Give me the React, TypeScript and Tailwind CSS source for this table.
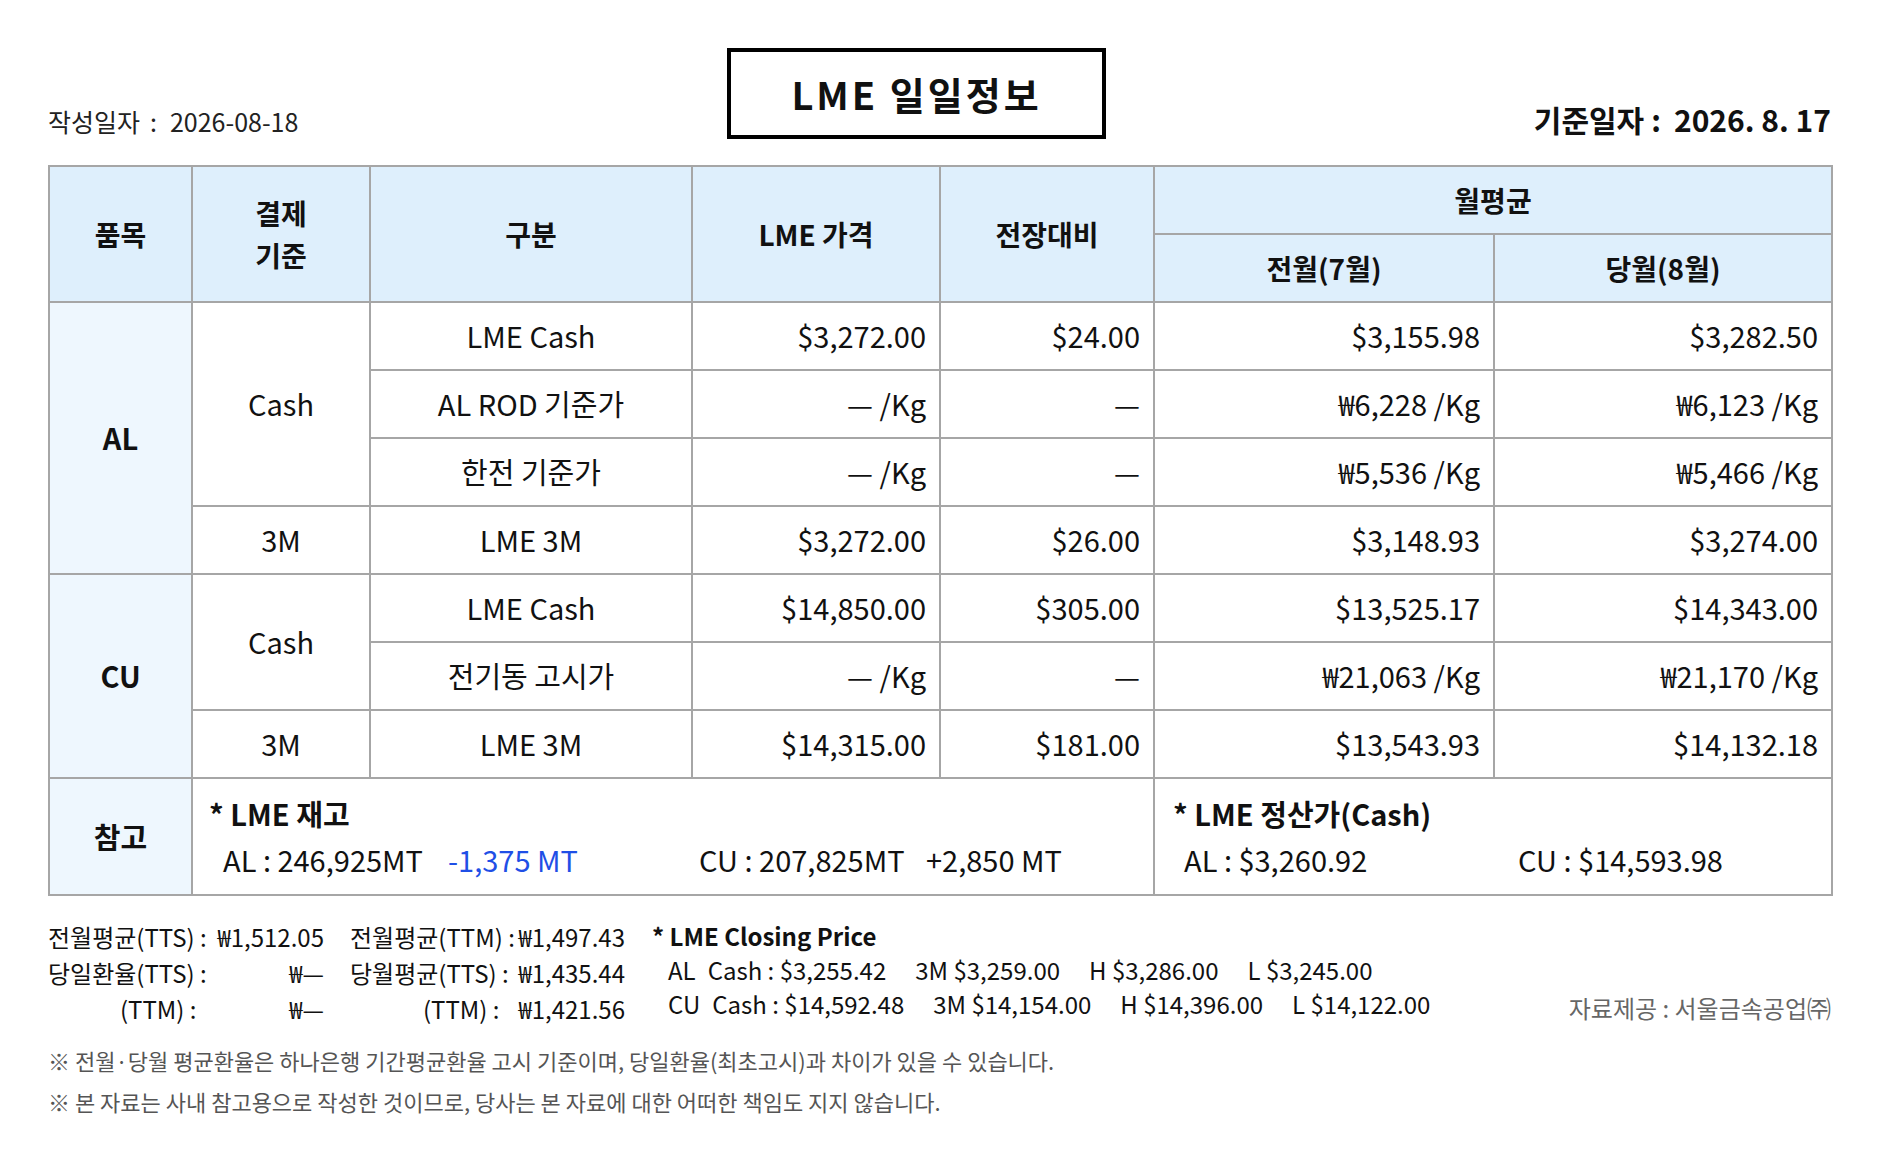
import React from 'react';

const FONT = "font-['Noto_Sans_CJK_KR','Noto_Sans',sans-serif]";
const CELL = 'border-2 border-[#a6a6a6] p-0 h-[68px]';
const NUM = `${CELL} text-right pr-[13px]`;
const MID = `${CELL} text-center`;

type Row = { sub: string; price: string; diff: string; prev: string; cur: string };

const AL_ROWS: Row[] = [
  { sub: 'LME Cash', price: '$3,272.00', diff: '$24.00', prev: '$3,155.98', cur: '$3,282.50' },
  { sub: 'AL ROD 기준가', price: '— /Kg', diff: '—', prev: '₩6,228 /Kg', cur: '₩6,123 /Kg' },
  { sub: '한전 기준가', price: '— /Kg', diff: '—', prev: '₩5,536 /Kg', cur: '₩5,466 /Kg' },
  { sub: 'LME 3M', price: '$3,272.00', diff: '$26.00', prev: '$3,148.93', cur: '$3,274.00' },
];

const CU_ROWS: Row[] = [
  { sub: 'LME Cash', price: '$14,850.00', diff: '$305.00', prev: '$13,525.17', cur: '$14,343.00' },
  { sub: '전기동 고시가', price: '— /Kg', diff: '—', prev: '₩21,063 /Kg', cur: '₩21,170 /Kg' },
  { sub: 'LME 3M', price: '$14,315.00', diff: '$181.00', prev: '$13,543.93', cur: '$14,132.18' },
];

function Values({ r }: { r: Row }) {
  return (
    <>
      <td className={MID}>{r.sub}</td>
      <td className={NUM}>{r.price}</td>
      <td className={NUM}>{r.diff}</td>
      <td className={NUM}>{r.prev}</td>
      <td className={NUM}>{r.cur}</td>
    </>
  );
}

export default function App() {
  return (
    <div className={`w-[1880px] h-[1164px] bg-white text-[#111] pl-[48px] pr-[49px] pt-[48px] ${FONT}`}>
      {/* title line */}
      <div className="flex items-end">
        <div className="flex-1 text-[25px] leading-[30px] pb-[3px] text-[#222]">
          작성일자<span className="ml-[10px] mr-[13px]">:</span>2026-08-18
        </div>
        <div className="w-[379px] h-[91px] mr-[46px] border-4 border-black flex items-center justify-center">
          <span className="text-[38px] font-bold tracking-[3px] leading-none">LME 일일정보</span>
        </div>
        <div className="flex-1 text-right text-[30px] font-bold leading-[34px] pb-[3px]">
          기준일자<span className="ml-[7px] mr-[13px]">:</span>2026. 8. 17
        </div>
      </div>

      {/* main table */}
      <table className="mt-[26px] w-[1783px] table-fixed border-collapse text-[29px]">
        <colgroup>
          <col className="w-[143px]" />
          <col className="w-[178px]" />
          <col className="w-[322px]" />
          <col className="w-[248px]" />
          <col className="w-[214px]" />
          <col className="w-[340px]" />
          <col className="w-[338px]" />
        </colgroup>
        <thead className="bg-[#deeffc] font-bold text-[28px]">
          <tr>
            <th rowSpan={2} className={MID}>품목</th>
            <th rowSpan={2} className={`${MID} leading-[42px]`}>결제<br />기준</th>
            <th rowSpan={2} className={MID}>구분</th>
            <th rowSpan={2} className={MID}>LME 가격</th>
            <th rowSpan={2} className={MID}>전장대비</th>
            <th colSpan={2} className={MID}>월평균</th>
          </tr>
          <tr>
            <th className={MID}>전월(7월)</th>
            <th className={MID}>당월(8월)</th>
          </tr>
        </thead>
        <tbody>
          {AL_ROWS.map((r, i) => (
            <tr key={'al' + i}>
              {i === 0 && <td rowSpan={4} className={`${MID} bg-[#eef7fe] font-bold`}>AL</td>}
              {i === 0 && <td rowSpan={3} className={MID}>Cash</td>}
              {i === 3 && <td className={MID}>3M</td>}
              <Values r={r} />
            </tr>
          ))}
          {CU_ROWS.map((r, i) => (
            <tr key={'cu' + i}>
              {i === 0 && <td rowSpan={3} className={`${MID} bg-[#eef7fe] font-bold`}>CU</td>}
              {i === 0 && <td rowSpan={2} className={MID}>Cash</td>}
              {i === 2 && <td className={MID}>3M</td>}
              <Values r={r} />
            </tr>
          ))}
          <tr>
            <td className={`${MID} h-[117px] bg-[#eef7fe] font-bold`}>참고</td>
            <td colSpan={4} className={`${CELL} h-[117px] align-top pl-[16px] pt-[14px]`}>
              <div className="font-bold leading-[40px]">* LME 재고</div>
              <div className="flex leading-[40px] mt-[6px] pl-[14px]">
                <span className="w-[225px]">AL : 246,925MT</span>
                <span className="w-[251px] text-[#1f4fe6]">-1,375 MT</span>
                <span className="w-[227px]">CU : 207,825MT</span>
                <span>+2,850 MT</span>
              </div>
            </td>
            <td colSpan={2} className={`${CELL} h-[117px] align-top pl-[18px] pt-[14px]`}>
              <div className="font-bold leading-[40px]">* LME 정산가(Cash)</div>
              <div className="flex leading-[40px] mt-[6px] pl-[11px]">
                <span className="w-[334px]">AL : $3,260.92</span>
                <span>CU : $14,593.98</span>
              </div>
            </td>
          </tr>
        </tbody>
      </table>

      {/* exchange rates & closing price */}
      <div className="mt-[23px] flex text-[24px]">
        <div className="grid grid-cols-[1fr_auto] w-[276px] leading-[36px]">
          <span>전월평균(TTS) :</span>
          <span className="text-right">₩1,512.05</span>
          <span>당일환율(TTS) :</span>
          <span className="text-right">₩—</span>
          <span className="pl-[72px]">(TTM) :</span>
          <span className="text-right">₩—</span>
        </div>
        <div className="ml-[26px] grid grid-cols-[1fr_auto] w-[275px] leading-[36px]">
          <span>전월평균(TTM) :</span>
          <span className="text-right">₩1,497.43</span>
          <span>당월평균(TTS) :</span>
          <span className="text-right">₩1,435.44</span>
          <span className="pl-[73px]">(TTM) :</span>
          <span className="text-right">₩1,421.56</span>
        </div>
        <div className="ml-[27px] leading-[34px]">
          <div className="font-bold">* LME Closing Price</div>
          <div className="pl-[16px] flex">
            <span>AL</span>
            <span className="ml-[12px]">Cash : $3,255.42</span>
            <span className="ml-[29px]">3M $3,259.00</span>
            <span className="ml-[29px]">H $3,286.00</span>
            <span className="ml-[29px]">L $3,245.00</span>
          </div>
          <div className="pl-[16px] flex">
            <span>CU</span>
            <span className="ml-[12px]">Cash : $14,592.48</span>
            <span className="ml-[29px]">3M $14,154.00</span>
            <span className="ml-[29px]">H $14,396.00</span>
            <span className="ml-[29px]">L $14,122.00</span>
          </div>
        </div>
        <div className="flex-1 self-end text-right text-[#666] leading-[34px] pb-[2px]">자료제공 : 서울금속공업㈜</div>
      </div>

      {/* notes */}
      <div className="mt-[13px] text-[22px] leading-[41px] text-[#555]">
        <div>※ 전월·당월 평균환율은 하나은행 기간평균환율 고시 기준이며, 당일환율(최초고시)과 차이가 있을 수 있습니다.</div>
        <div>※ 본 자료는 사내 참고용으로 작성한 것이므로, 당사는 본 자료에 대한 어떠한 책임도 지지 않습니다.</div>
      </div>
    </div>
  );
}
